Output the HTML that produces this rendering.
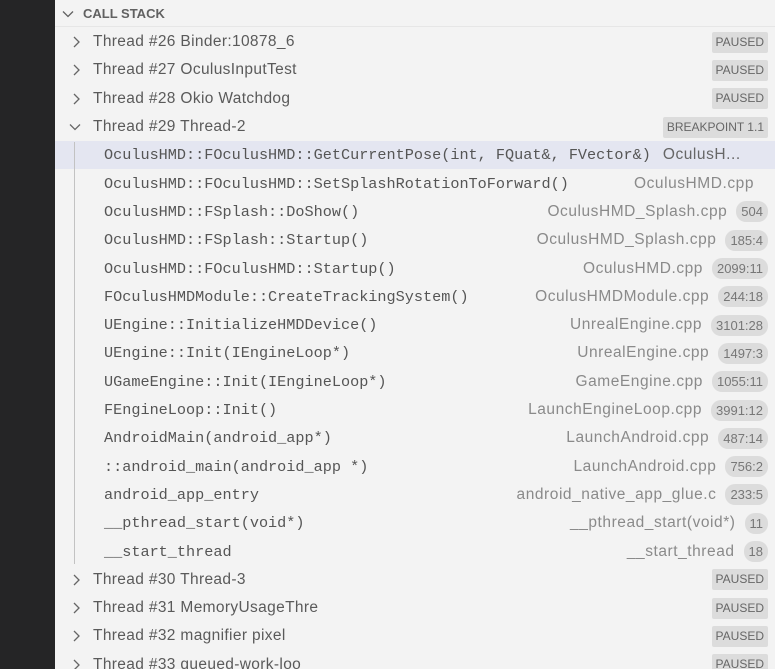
<!DOCTYPE html>
<html><head><meta charset="utf-8"><style>
*{margin:0;padding:0;box-sizing:border-box}
html,body{width:775px;height:669px;overflow:hidden}
body{background:#f3f3f3;font-family:"Liberation Sans",sans-serif;position:relative}
.dark{position:absolute;left:0;top:0;width:55px;height:669px;background:#252526}
.hdr{position:absolute;left:55px;top:0;width:720px;height:27px;background:#f3f3f3;border-bottom:1px solid #e6e6e6;font-size:13px;font-weight:bold;color:#616161;line-height:27px;padding-left:28px}
.hdr svg{position:absolute;left:7px;top:9px}
.row{position:absolute;left:55px;width:720px;height:28.3px;display:flex;align-items:center;white-space:nowrap}
.th{padding-left:38px;font-size:15.5px;letter-spacing:0.35px;color:#5a5a5a}
.th svg{position:absolute;left:16px;top:8px}
.fr{padding-left:49px;font-family:"Liberation Mono",monospace;font-size:15.2px;color:#555}
.sp{flex:1}
.file{font-size:15.5px;letter-spacing:0.55px;color:#8a8a8a;font-family:"Liberation Sans",sans-serif}
.pill{margin-left:9px;margin-right:7px;background:#dcdcdc;border-radius:10px;height:21px;line-height:21px;padding:0 5px;font-size:13px;color:#777;font-family:"Liberation Sans",sans-serif;min-width:22px;text-align:center;letter-spacing:0}
.badge{margin-right:7px;background:#dcdcdc;border-radius:2px;height:21px;line-height:21px;padding:0 4px;font-size:12px;color:#666;letter-spacing:0}
.sel{background:#e4e6f1}
.guide{position:absolute;left:74px;top:142px;width:1px;height:422px;background:#c2c2c2}
</style></head><body>
<div class="dark"></div>
<div class="hdr"><svg width="12" height="10" viewBox="0 0 12 10"><path d="M1 2.5 L6 7.5 L11 2.5" fill="none" stroke="#616161" stroke-width="1.3"/></svg>CALL STACK</div>

<div class="row th" style="top:28px"><svg width="10" height="12" viewBox="0 0 10 12"><path d="M3 1 L8 6 L3 11" fill="none" stroke="#666" stroke-width="1.3"/></svg>Thread #26 Binder:10878_6<span class="sp"></span><span class="badge">PAUSED</span></div>
<div class="row th" style="top:56.3px"><svg width="10" height="12" viewBox="0 0 10 12"><path d="M3 1 L8 6 L3 11" fill="none" stroke="#666" stroke-width="1.3"/></svg>Thread #27 OculusInputTest<span class="sp"></span><span class="badge">PAUSED</span></div>
<div class="row th" style="top:84.6px"><svg width="10" height="12" viewBox="0 0 10 12"><path d="M3 1 L8 6 L3 11" fill="none" stroke="#666" stroke-width="1.3"/></svg>Thread #28 Okio Watchdog<span class="sp"></span><span class="badge">PAUSED</span></div>
<div class="row th" style="top:112.9px"><svg width="12" height="10" viewBox="0 0 12 10" style="left:14px;top:9px"><path d="M1 2.5 L6 7.5 L11 2.5" fill="none" stroke="#666" stroke-width="1.3"/></svg>Thread #29 Thread-2<span class="sp"></span><span class="badge">BREAKPOINT 1.1</span></div>

<div class="row fr sel" style="top:141.2px">OculusHMD::FOculusHMD::GetCurrentPose(int, FQuat&amp;, FVector&amp;)<span class="file" style="margin-left:12px;color:#666">OculusH...</span></div>
<div class="row fr" style="top:169.5px">OculusHMD::FOculusHMD::SetSplashRotationToForward()<span class="sp"></span><span class="file" style="margin-right:21px">OculusHMD.cpp</span></div>
<div class="row fr" style="top:197.8px">OculusHMD::FSplash::DoShow()<span class="sp"></span><span class="file">OculusHMD_Splash.cpp</span><span class="pill">504</span></div>
<div class="row fr" style="top:226.1px">OculusHMD::FSplash::Startup()<span class="sp"></span><span class="file">OculusHMD_Splash.cpp</span><span class="pill">185:4</span></div>
<div class="row fr" style="top:254.4px">OculusHMD::FOculusHMD::Startup()<span class="sp"></span><span class="file">OculusHMD.cpp</span><span class="pill">2099:11</span></div>
<div class="row fr" style="top:282.7px">FOculusHMDModule::CreateTrackingSystem()<span class="sp"></span><span class="file">OculusHMDModule.cpp</span><span class="pill">244:18</span></div>
<div class="row fr" style="top:311px">UEngine::InitializeHMDDevice()<span class="sp"></span><span class="file">UnrealEngine.cpp</span><span class="pill">3101:28</span></div>
<div class="row fr" style="top:339.3px">UEngine::Init(IEngineLoop*)<span class="sp"></span><span class="file">UnrealEngine.cpp</span><span class="pill">1497:3</span></div>
<div class="row fr" style="top:367.6px">UGameEngine::Init(IEngineLoop*)<span class="sp"></span><span class="file">GameEngine.cpp</span><span class="pill">1055:11</span></div>
<div class="row fr" style="top:395.9px">FEngineLoop::Init()<span class="sp"></span><span class="file">LaunchEngineLoop.cpp</span><span class="pill">3991:12</span></div>
<div class="row fr" style="top:424.2px">AndroidMain(android_app*)<span class="sp"></span><span class="file">LaunchAndroid.cpp</span><span class="pill">487:14</span></div>
<div class="row fr" style="top:452.5px">::android_main(android_app *)<span class="sp"></span><span class="file">LaunchAndroid.cpp</span><span class="pill">756:2</span></div>
<div class="row fr" style="top:480.8px">android_app_entry<span class="sp"></span><span class="file">android_native_app_glue.c</span><span class="pill">233:5</span></div>
<div class="row fr" style="top:509.1px">__pthread_start(void*)<span class="sp"></span><span class="file">__pthread_start(void*)</span><span class="pill">11</span></div>
<div class="row fr" style="top:537.4px">__start_thread<span class="sp"></span><span class="file">__start_thread</span><span class="pill">18</span></div>
<div class="guide"></div>

<div class="row th" style="top:565.7px"><svg width="10" height="12" viewBox="0 0 10 12"><path d="M3 1 L8 6 L3 11" fill="none" stroke="#666" stroke-width="1.3"/></svg>Thread #30 Thread-3<span class="sp"></span><span class="badge">PAUSED</span></div>
<div class="row th" style="top:594px"><svg width="10" height="12" viewBox="0 0 10 12"><path d="M3 1 L8 6 L3 11" fill="none" stroke="#666" stroke-width="1.3"/></svg>Thread #31 MemoryUsageThre<span class="sp"></span><span class="badge">PAUSED</span></div>
<div class="row th" style="top:622.3px"><svg width="10" height="12" viewBox="0 0 10 12"><path d="M3 1 L8 6 L3 11" fill="none" stroke="#666" stroke-width="1.3"/></svg>Thread #32 magnifier pixel<span class="sp"></span><span class="badge">PAUSED</span></div>
<div class="row th" style="top:650.6px"><svg width="10" height="12" viewBox="0 0 10 12"><path d="M3 1 L8 6 L3 11" fill="none" stroke="#666" stroke-width="1.3"/></svg>Thread #33 queued-work-loo<span class="sp"></span><span class="badge">PAUSED</span></div>
</body></html>
